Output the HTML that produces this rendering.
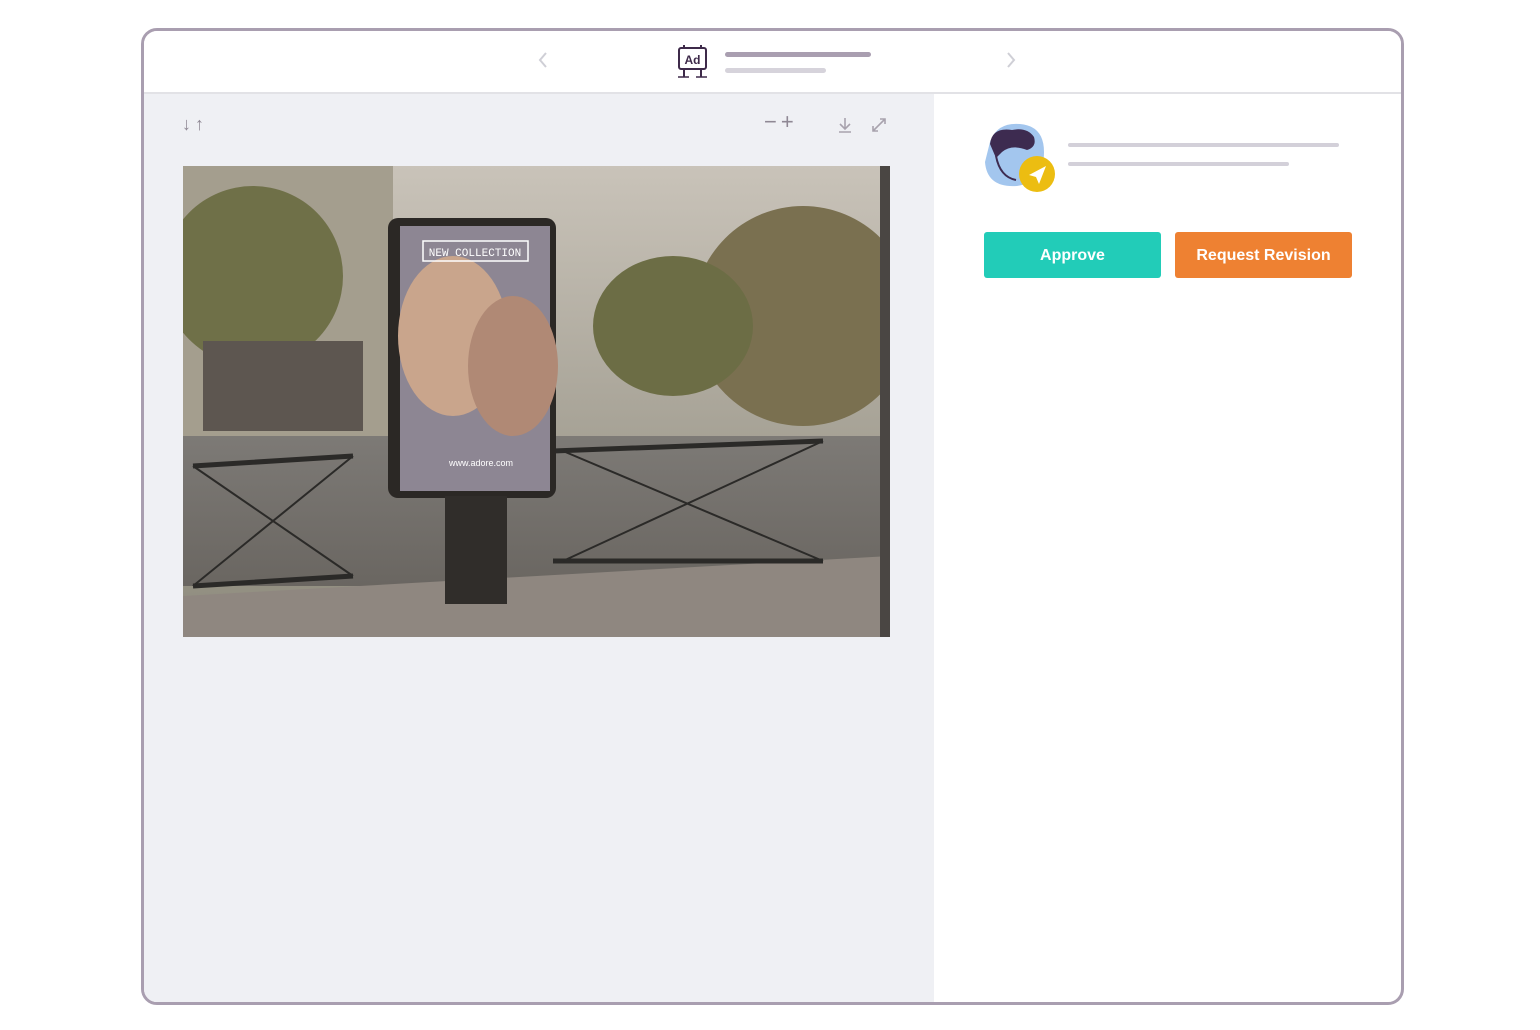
<!DOCTYPE html>
<html><head><meta charset="utf-8"><style>
body{margin:0;width:1540px;height:1030px;background:#fff;font-family:"Liberation Sans",sans-serif;position:relative;overflow:hidden}
.frame{position:absolute;left:141px;top:28px;width:1257px;height:971px;border:3px solid #a99eb0;border-radius:16px;overflow:hidden;background:#fff}
.hdr{position:absolute;left:0;top:0;right:0;height:61px;border-bottom:2px solid #e2e2e6;background:#fff}
.left{position:absolute;left:0;top:63px;width:790px;bottom:0;background:#eff0f4}
.bar{position:absolute;border-radius:3px}
.btn{position:absolute;top:201px;height:46px;width:177px;border-radius:3px;color:#fff;font-weight:bold;font-size:16px;text-align:center;line-height:48px}
</style></head><body>
<div class="frame">
 <div class="hdr">
  <svg style="position:absolute;left:393px;top:20px" width="12" height="18"><path d="M9 2 L3 9 L9 16" stroke="#cfcfd6" stroke-width="2" fill="none"/></svg>
  <svg style="position:absolute;left:861px;top:20px" width="12" height="18"><path d="M3 2 L9 9 L3 16" stroke="#cfcfd6" stroke-width="2" fill="none"/></svg>
  <svg style="position:absolute;left:533px;top:13px" width="32" height="36"><rect x="2" y="4" width="27" height="21" rx="2" fill="none" stroke="#3e2a4a" stroke-width="2"/><line x1="7" y1="1" x2="7" y2="4" stroke="#3e2a4a" stroke-width="2"/><line x1="24" y1="1" x2="24" y2="4" stroke="#3e2a4a" stroke-width="2"/><line x1="7" y1="25" x2="7" y2="33" stroke="#3e2a4a" stroke-width="2"/><line x1="24" y1="25" x2="24" y2="33" stroke="#3e2a4a" stroke-width="2"/><line x1="1" y1="33" x2="12" y2="33" stroke="#3e2a4a" stroke-width="1.5"/><line x1="19" y1="33" x2="30" y2="33" stroke="#3e2a4a" stroke-width="1.5"/><text x="15.5" y="20" font-size="12" font-weight="bold" text-anchor="middle" fill="#3e2a4a" font-family="Liberation Sans">Ad</text></svg>
  <div class="bar" style="left:581px;top:21px;width:146px;height:5px;background:#a99eb0"></div>
  <div class="bar" style="left:581px;top:37px;width:101px;height:5px;background:#d6d3db"></div>
 </div>
 <div class="left">
  <div style="position:absolute;left:38px;top:20px;color:#8f8894;font-size:18px;letter-spacing:4px">↓↑</div>
  <div style="position:absolute;left:620px;top:15px;color:#8f8894;font-size:22px;letter-spacing:4px">−+</div>
  <svg style="position:absolute;left:693px;top:23px" width="16" height="16"><path d="M8 1 V11 M3 7 L8 12 L13 7 M2 15 H14" stroke="#a8a2ad" stroke-width="1.6" fill="none"/></svg>
  <svg style="position:absolute;left:727px;top:23px" width="16" height="16"><path d="M2 14 L14 2 M9 2 H14 V7 M2 9 V14 H7" stroke="#a8a2ad" stroke-width="1.6" fill="none"/></svg>
  <svg style="position:absolute;left:39px;top:72px" width="707" height="471" viewBox="0 0 707 471">
   <defs><linearGradient id="sky" x1="0" y1="0" x2="0" y2="1"><stop offset="0" stop-color="#c9c3b9"/><stop offset="1" stop-color="#8d8a7c"/></linearGradient>
   <linearGradient id="rd" x1="0" y1="0" x2="0" y2="1"><stop offset="0" stop-color="#7d7a76"/><stop offset="1" stop-color="#6a6661"/></linearGradient></defs>
   <rect width="707" height="471" fill="url(#sky)"/>
   <rect x="0" y="0" width="210" height="270" fill="#a49e8e"/>
   <ellipse cx="70" cy="110" rx="90" ry="90" fill="#6f7048"/>
   <ellipse cx="620" cy="150" rx="110" ry="110" fill="#7a7050"/>
   <ellipse cx="490" cy="160" rx="80" ry="70" fill="#6c6d45"/>
   <rect x="20" y="175" width="160" height="90" fill="#5d5650"/>
   <rect x="0" y="270" width="707" height="150" fill="url(#rd)"/>
   <polygon points="0,430 707,390 707,471 0,471" fill="#8f8780"/>
   <path d="M10 300 L170 290 M10 420 L170 410 M370 285 L640 275 M370 395 L640 395" stroke="#2b2a28" stroke-width="5"/>
   <path d="M10 300 L170 410 M170 290 L10 420 M380 285 L640 395 M640 275 L380 395" stroke="#2b2a28" stroke-width="2"/>
   <rect x="205" y="52" width="168" height="280" rx="10" fill="#2b2825"/>
   <rect x="217" y="60" width="150" height="265" fill="#8d8693"/>
   <ellipse cx="270" cy="170" rx="55" ry="80" fill="#c9a58c"/>
   <ellipse cx="330" cy="200" rx="45" ry="70" fill="#b08975"/>
   <rect x="240" y="75" width="105" height="20" fill="none" stroke="#fff" stroke-width="1.5"/>
   <text x="292" y="90" font-size="11" fill="#fff" text-anchor="middle" font-family="Liberation Mono">NEW COLLECTION</text>
   <text x="298" y="300" font-size="9" fill="#fff" text-anchor="middle">www.adore.com</text>
   <rect x="262" y="330" width="62" height="108" fill="#302d2a"/>
   <rect x="697" y="0" width="10" height="471" fill="#4a4643"/>
  </svg>
 </div>
 <svg style="position:absolute;left:838px;top:91px" width="75" height="72"><path d="M8 20 Q15 0 38 2 Q62 4 62 30 Q62 60 35 64 Q5 66 3 40 Z" fill="#a3c6ee"/><path d="M8 22 Q10 5 30 8 Q45 5 52 15 Q55 25 45 28 Q30 22 20 30 L14 36 Z" fill="#3d2b50"/><path d="M14 34 Q18 55 34 58" stroke="#3d2b50" stroke-width="2" fill="none"/><circle cx="55" cy="52" r="18" fill="#ecbd11"/><path d="M47 53 L64 44 L57 62 L54 55 Z" fill="#fff"/></svg>
 <div class="bar" style="left:924px;top:112px;width:271px;height:4px;background:#d3d0d9"></div>
 <div class="bar" style="left:924px;top:131px;width:221px;height:4px;background:#d3d0d9"></div>
 <div class="btn" style="left:840px;background:#22ccb8">Approve</div>
 <div class="btn" style="left:1031px;background:#ee8132">Request Revision</div>
</div>
</body></html>
